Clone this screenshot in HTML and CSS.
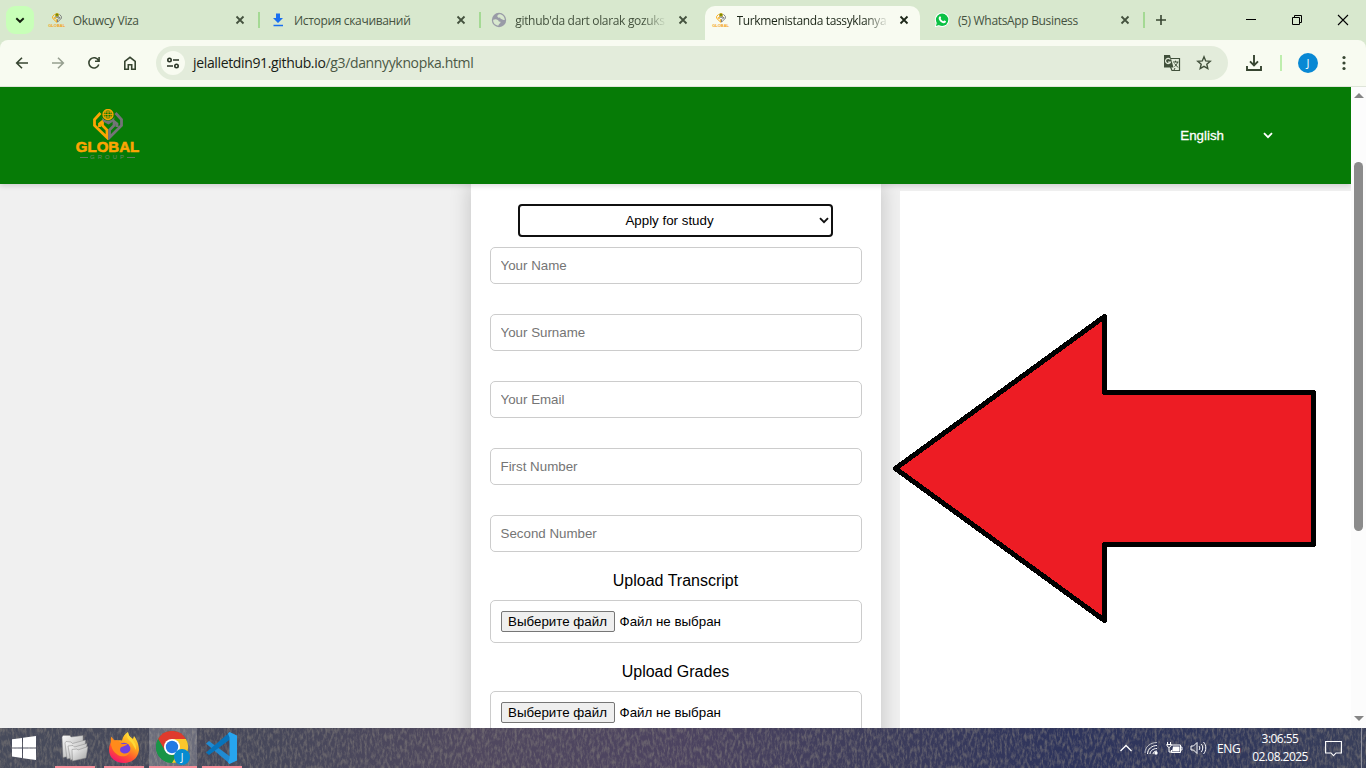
FILE: index.html
```html
<!DOCTYPE html>
<html lang="en">
<head>
<meta charset="utf-8">
<title>Turkmenistanda tassyklanyar</title>
<link rel="stylesheet" href="styles.css">
</head>
<body>
<svg class="defs" width="0" height="0">
  <symbol id="close" viewBox="0 0 16 16"><path d="M4.500 4.500l7 7M11.500 4.500l-7 7" stroke="currentColor" stroke-width="1.800" fill="none"/></symbol>
  <symbol id="mark" viewBox="0 0 64 34">
    <path d="M24.500 4L18.500 10.500v6L31 28.500V21l-4.500-4.500v-4L23.500 15v3" fill="none" stroke="#fca503" stroke-width="2.800"/>
    <path d="M39.500 4l6 6.500v6L33.500 28.500V21l4.500-4.500v-4l3 2.500v3" fill="none" stroke="#737477" stroke-width="2.800"/>
    <path d="M25.500 8c3 5 10 5 13 0l-.5 4-5.500 3.500-5.500-3z" fill="#737477"/>
    <circle cx="32" cy="5.500" r="5" fill="#067b06" stroke="#fca503" stroke-width="1.300"/>
    <path d="M27 5.500h10M28 3h8M28 8h8M32 .5v10M30.500 1c-2 3-2 6 0 9M33.500 1c2 3 2 6 0 9" fill="none" stroke="#fca503" stroke-width=".8"/>
  </symbol>
</svg>

<div class="tabstrip">
  <button class="tab-search"><svg width="12" height="12" viewBox="0 0 12 12"><path d="M2.300 4.200L6 7.800l3.700-3.600" fill="none" stroke="#14210f" stroke-width="1.900"/></svg></button>
  <div class="tab">
    <span class="fav brand"><svg width="16" height="10" viewBox="14 0 36 31"><use href="#mark" width="64" height="34"/></svg><b>GLOBAL</b></span>
    <span class="label">Okuwcy Viza</span>
    <svg class="x" width="16" height="16"><use href="#close"/></svg>
  </div>
  <div class="tab">
    <svg class="fav" width="16" height="16" viewBox="0 0 16 16"><path d="M6 2h4v4.500h3L8 11.500 3 6.500h3zM3.500 13.200h9.500v1.600H3.500z" transform="translate(0 -.5)" fill="#1a6ff0"/></svg>
    <span class="label">История скачиваний</span>
    <svg class="x" width="16" height="16"><use href="#close"/></svg>
  </div>
  <div class="tab no-sep">
    <svg class="fav" width="16" height="16" viewBox="0 0 16 16"><circle cx="8" cy="8" r="7.200" fill="#999ba7"/><path d="M2.200 7.700C5 6.500 7.500 7.500 7.800 9.500l1.700.2c.2 1.800-1.500 1.500-2 3.800C4.500 13.500 1.800 11 2.200 7.700zM8 2.200c-1 .8-2 1-1.600 2.600.8.400 1.200 1.500 2.200.8 1-.4.500 1.400 1.700 1.500 1.200 0 1.200 1.500 3.500.8C13.600 4.800 11.500 2 8 2.200z" fill="#d8e8ce"/></svg>
    <span class="label fade">github'da dart olarak gozuks</span>
    <svg class="x" width="16" height="16"><use href="#close"/></svg>
  </div>
  <div class="tab active">
    <span class="fav brand"><svg width="16" height="10" viewBox="14 0 36 31"><use href="#mark" width="64" height="34"/></svg><b>GLOBAL</b></span>
    <span class="label fade tight">Turkmenistanda tassyklanyar</span>
    <svg class="x" width="16" height="16"><use href="#close"/></svg>
  </div>
  <div class="tab">
    <svg class="fav" width="16" height="16" viewBox="0 0 16 16"><path d="M.8 15.200l1-4A7.200 7.200 0 1 1 5 14.200z" fill="#fff"/><circle cx="8.100" cy="7.800" r="6.200" fill="#0bc144"/><path d="M1.900 14l1-3.500 2.300 2.400z" fill="#0bc144"/><path d="M5.500 4.600c.6-.5 1-.3 1.300.4.500 1 .3 1.200-.2 1.800.7 1.300 1.400 2 2.700 2.500.6-.7.8-1 1.300-.7l1.400.7c0 1.400-1.200 2-2.300 1.900C7 10.800 4.700 8.200 4.700 6.200c0-.7.3-1.200.8-1.600z" fill="#fff"/></svg>
    <span class="label">(5) WhatsApp Business</span>
    <svg class="x" width="16" height="16"><use href="#close"/></svg>
  </div>
  <svg class="plus" width="12" height="12" viewBox="0 0 12 12"><path d="M6 1v10M1 6h10" stroke="#374531" stroke-width="1.600"/></svg>
  <div class="win">
    <svg width="46" height="40" viewBox="0 0 46 40"><path d="M18 19.500h10" stroke="#000"/></svg>
    <svg width="46" height="40" viewBox="0 0 46 40"><path d="M18.500 17.500h7v7h-7zM20.500 17v-1.500h7v7H26" fill="none" stroke="#000"/></svg>
    <svg width="46" height="40" viewBox="0 0 46 40"><path d="M18 15l10 10M28 15l-10 10" stroke="#000" stroke-width="1.100"/></svg>
  </div>
</div>

<div class="toolbar">
  <svg class="nav" viewBox="0 0 16 16"><path d="M14 8H3M8 2.700L2.700 8 8 13.300" /></svg>
  <svg class="nav off" viewBox="0 0 16 16"><path d="M2 8h11M8 2.700L13.300 8 8 13.300"/></svg>
  <svg class="nav" viewBox="0 0 16 16"><path d="M12.800 9.500A5.100 5.100 0 1 1 12.500 5.500M13.100 2v4.200H9"/></svg>
  <svg class="nav" viewBox="0 0 16 16"><path d="M2.800 6.400L8 2.300l5.200 4.100v7.800H9.700V9.700H6.300v4.500H2.800z"/></svg>
  <div class="omnibox">
    <span class="site"><svg width="14" height="14" viewBox="0 0 14 14"><g fill="none" stroke="#2a3526" stroke-width="1.600"><circle cx="3.500" cy="4" r="1.700"/><circle cx="10.500" cy="10" r="1.700"/><path d="M7 4h6M1 10h6"/></g></svg></span>
    <span class="url">jelalletdin91.github.io<i>/g3/dannyyknopka.html</i></span>
    <svg class="translate" width="18" height="18" viewBox="0 0 18 18"><path d="M7 4.500h9.500v12H9L7.500 13" fill="none" stroke="#41503b" stroke-width="1.200"/><path d="M1 1h6l3.500 12.500H1z" fill="#41503b"/><path d="M7.300 5.500A2.600 2.600 0 1 0 7.500 8H5" fill="none" stroke="#e3ecdb" stroke-width="1.200"/><path d="M10 8h5.500M12.500 6.700V8M14.500 8c-.3 2-1.500 3.500-3 4.500M11.500 9.500l3.500 4M11 16l1-2" fill="none" stroke="#41503b"/></svg>
    <svg class="star" width="16" height="16" viewBox="0 0 16 16"><path d="M8 1.800l1.700 4.100 4.500.4-3.400 2.900 1 4.400L8 11.300l-3.800 2.300 1-4.400-3.400-2.900 4.500-.4z" fill="none" stroke="#41503b" stroke-width="1.400"/></svg>
  </div>
  <svg class="dl" width="18" height="18" viewBox="0 0 18 18"><path d="M9 1v10M5 7.300l4 4 4-4M2 12v4h14v-4" fill="none" stroke="#374531" stroke-width="1.900"/></svg>
  <span class="bar"></span>
  <span class="avatar">J</span>
  <svg class="dots" width="4" height="16" viewBox="0 0 4 16"><g fill="#374531"><circle cx="2" cy="2.500" r="1.600"/><circle cx="2" cy="8" r="1.600"/><circle cx="2" cy="13.500" r="1.600"/></g></svg>
</div>

<div class="viewport">
  <main class="page">
    <header class="head">
      <div class="logo">
        <svg width="64" height="31" viewBox="0 0 64 31"><use href="#mark" width="64" height="34"/></svg>
        <b>GLOBAL</b>
        <span class="sub">GROUP</span>
      </div>
      <div class="lang">English<svg width="10" height="7" viewBox="0 0 10 7"><path d="M1 1.200l4 4 4-4" fill="none" stroke="#fff" stroke-width="1.800"/></svg></div>
    </header>
    <form class="card">
      <div class="choice"><span>Apply for study</span><svg width="10" height="7" viewBox="0 0 10 7"><path d="M1 1.200l4 4 4-4" fill="none" stroke="#101010" stroke-width="1.900"/></svg></div>
      <input class="field" placeholder="Your Name">
      <input class="field" placeholder="Your Surname">
      <input class="field" placeholder="Your Email">
      <input class="field" placeholder="First Number">
      <input class="field" placeholder="Second Number">
      <div class="caption">Upload Transcript</div>
      <div class="file"><span class="pick">Выберите файл</span><span>Файл не выбран</span></div>
      <div class="caption">Upload Grades</div>
      <div class="file"><span class="pick">Выберите файл</span><span>Файл не выбран</span></div>
    </form>
    <div class="paper"></div>
    <svg class="arrow" width="424" height="310" viewBox="0 0 424 310" shape-rendering="crispEdges"><path d="M3.500 155.500L212.500 3.500v76h209v152h-209v76z" fill="#ed1c24" stroke="#000" stroke-width="5" stroke-linejoin="round"/></svg>
  </main>
  <div class="scroll"><i class="up"></i><span class="thumb"></span><i class="down"></i></div>
</div>

<footer class="taskbar">
  <svg class="grain" width="1366" height="40">
    <filter id="g" x="0" y="0" width="100%" height="100%" color-interpolation-filters="sRGB"><feTurbulence type="fractalNoise" baseFrequency="0.4 0.16" numOctaves="3" seed="5"/><feColorMatrix values="0 0 0 0 .52  0 0 0 0 .5  0 0 0 0 .48  2.600 0 0 0 -1.050"/></filter>
    <rect width="1366" height="40" filter="url(#g)"/>
  </svg>
  <div class="app start"><svg width="24" height="24" viewBox="0 0 24 24"><path d="M0 3.300l10-1.400v9.500H0zM11 1.800L24 0v11.400H11zM0 12.400h10V22L0 20.600zM11 12.400h13V24l-13-1.800z" fill="#fff"/></svg></div>
  <div class="app run"><svg width="30" height="28" viewBox="0 0 30 28">
    <defs><linearGradient id="fd" x1="0" y1="0" x2="1" y2="1"><stop offset="0" stop-color="#fafafa"/><stop offset="1" stop-color="#a2a2a2"/></linearGradient></defs>
    <g fill="url(#fd)" stroke="#858585" stroke-width=".5"><path d="M2 3l1-1.500h7l1 1.500 12-1.500v18L3 23.500z"/><path d="M5 9l1-1.500 5 .5 1.500 1.500 13-3.500-1 15L7 25z"/><path d="M8 12l5-.5 1.500 1.500L27 9.500l-1.500 13L10.500 26z"/><path d="M12 15.500l5-.5 1 1 10-3.500-2 11.500L12.500 27z"/></g></svg></div>
  <div class="app run"><svg width="32" height="32" viewBox="0 0 32 32">
    <defs><linearGradient id="ff" x1=".85" y1="0" x2=".3" y2="1"><stop offset="0" stop-color="#fff044"/><stop offset=".38" stop-color="#ffab1d"/><stop offset=".7" stop-color="#ff5330"/><stop offset="1" stop-color="#f5156c"/></linearGradient></defs>
    <path d="M3 5c1 0 2 3 4 3.500C9 8 12 8 14 8.500 15 4 17 2 20 0c0 4 3 5 5 7l1-3c4 5 5 11 5 14-1 8-7 13-15 13C7 31 1 25 1 18 1 14 2 12 3 10z" fill="url(#ff)"/>
    <circle cx="16" cy="17" r="6.300" fill="#7141df"/><path d="M3 5c1 0 2 3 4 3.500 2-.7 4 .5 6 3.500h6c0 2-5 2-6.500 4-1.500 3 1 5.500 4.500 5.500 2 0 4-1 5-3 0 6-9 8-14 3C4 19 2 12 3 5z" fill="#ff8b1b"/><path d="M20 0c0 6 9 8 8 18l-4-7c-2-3-7-4-4-11z" fill="#ffda37"/></svg></div>
  <div class="app run current"><svg width="34" height="34" viewBox="0 0 34 34">
    <circle cx="16" cy="16" r="16" fill="#199447"/><path d="M2.100 8A16 16 0 0 1 29.900 8L16 16H9z" fill="#df3a2d"/><path d="M16 8h13.900A16 16 0 0 1 16 32l7-12z" fill="#fcc62c"/><path d="M2.100 8l7 12 7-4z" fill="#df3a2d"/><path d="M2.100 8l7 12 6.900 4-4 7.500A16 16 0 0 1 2.100 8z" fill="#199447"/><circle cx="16" cy="16" r="8" fill="#fff"/><circle cx="16" cy="16" r="6.200" fill="#2379e4"/>
    <circle cx="26" cy="26" r="8" fill="#078bd0"/><text x="26" y="29.700" text-anchor="middle" font-family="Open Sans,sans-serif" font-size="10" fill="#fff">J</text></svg></div>
  <div class="app run"><svg width="32" height="32" viewBox="0 0 32 32"><path d="M0 11.500L3 9l21 15.500V32z" fill="#1f8ad2"/><path d="M0 20.500L3 23 24 7.500V0z" fill="#0873ba"/><path d="M23.500 0L31 3.500v25L23.500 32 22 30.500l1.500-4v-21L22 1.500z" fill="#27a5ef"/></svg></div>
  <div class="tray">
    <svg width="14" height="10" viewBox="0 0 14 10"><path d="M1.500 8L7 2.500 12.500 8" fill="none" stroke="#fff" stroke-width="1.300"/></svg>
    <svg class="wifi" width="14" height="14" viewBox="0 0 14 14"><g fill="none" stroke="#fff"><path d="M1 12C1 6 6 1.500 13 1.500" opacity=".65"/><path d="M3.500 13C3.500 8 8 4.500 13 4.500M6 13c0-3 3-5.500 7-5.500M9 13c0-2 2-3 4-3"/></g><circle cx="12" cy="12" r="1.700" fill="#fff"/></svg>
    <svg class="batt" width="17" height="14" viewBox="0 0 17 14"><path d="M5 4h9.500v7.500h-9V9M15 6h1v3h-1" fill="none" stroke="#fff"/><path d="M7 5.500h6.500v5H6z" fill="#fff"/><path d="M1.500 1v2M4.500 1v2M.5 3.500h5M1 4c0 3 4 3 4 0M3 6v5h3" fill="none" stroke="#fff"/></svg>
    <svg class="vol" width="17" height="14" viewBox="0 0 17 14"><path d="M1 5h2.500L7 1.500v11L3.500 9H1zM9 5c1 1 1 3 0 4M11.200 3c2 2 2 6 0 8M13.500 1c3 3 3 9 0 12" fill="none" stroke="#fff"/></svg>
    <span class="eng">ENG</span>
    <div class="clock"><span>3:06:55</span><span>02.08.2025</span></div>
    <svg class="note" width="17" height="17" viewBox="0 0 17 17"><path d="M.6 1.500h15.800v11.500H11l-2.500 2.700L6 13H.6z" fill="none" stroke="#fff" stroke-width="1.100"/></svg>
  </div>
  <span class="peek"></span>
</footer>
</body>
</html>
```
FILE: styles.css
```css
* { box-sizing: border-box; }
body { margin: 0; width: 1366px; height: 768px; overflow: hidden; display: flex; flex-direction: column; background: #d8e8ce; font-family: "Liberation Sans", Arial, sans-serif; }
.defs { position: absolute; }
svg { flex: none; display: block; }

.tabstrip { height: 40px; flex: none; display: flex; padding-left: 6px; font: 12px "Open Sans", "Noto Sans", sans-serif; color: #44523e; }
.tab-search { width: 28px; height: 28px; margin: 6px 4.500px 0 0; padding: 0; border: 0; border-radius: 9px; background: #c8ffb8; display: grid; place-items: center; }
.tab { width: 221.300px; flex: none; height: 40px; padding: 0 11.800px 0 10.200px; display: flex; align-items: center; position: relative; }
.tab::after { content: ""; position: absolute; right: 0; top: 12px; width: 2px; height: 16px; background: #a4d994; }
.tab.no-sep::after, .tab.active::after { display: none; }
.tab.active { color: #1c2618; z-index: 0; }
.tab.active::before { content: ""; position: absolute; z-index: -1; left: 2.600px; right: 3.700px; top: 6px; bottom: 0; border-radius: 10px 10px 0 0; background: #f8fbf1; }
.fav { width: 16px; margin-right: 8px; flex: none; }
.brand { display: flex; flex-direction: column; align-items: center; }
.brand b { font: bold 4px/5px "Liberation Sans", sans-serif; color: #f5a51c; }
.label { flex: 1; min-width: 0; white-space: nowrap; margin-right: 9px; line-height: 18px; padding-top: 1px; letter-spacing: -.33px; }
.tight { letter-spacing: -.36px; }
.fade { -webkit-mask-image: linear-gradient(90deg, #000 128px, transparent 152px); mask-image: linear-gradient(90deg, #000 128px, transparent 152px); }
.plus { margin: 14px 0 0 10px; }
.win { display: flex; margin-left: auto; }

.toolbar { height: 47px; flex: none; display: flex; align-items: center; padding: 0 20px 1px 14px; background: #f8fbf1; border-radius: 8px 8px 0 0; border-bottom: 1px solid #dfe5d9; }
.nav { width: 16px; height: 16px; margin-right: 20px; fill: none; stroke: #374531; stroke-width: 1.600; }
.off { opacity: .5; }
.omnibox { width: 1072px; height: 34px; margin-left: -2px; border-radius: 17px; background: #e3ecdb; display: flex; align-items: center; padding: 0 16px 0 5px; }
.site { width: 24px; height: 24px; border-radius: 50%; background: #f8fbf1; display: grid; place-items: center; }
.url { flex: 1; margin-left: 8px; font: 14px "Open Sans", "Noto Sans", sans-serif; letter-spacing: -.35px; color: #182015; }
.url i { font-style: normal; color: #4b5845; }
.translate { margin-right: 15px; }
.dl { margin-left: 17px; }
.bar { width: 2px; height: 16px; background: #beeeae; margin: 0 16px 0 17px; }
.avatar { width: 20px; height: 20px; border-radius: 50%; background: #0888d4; color: #fff; display: grid; place-items: center; font: 11px/20px "Open Sans", sans-serif; }
.dots { margin-left: auto; }

.viewport { flex: 1; min-height: 0; display: flex; }
.page { flex: 1; position: relative; overflow: hidden; background: #f0f0f0; display: flex; flex-direction: column; align-items: center; }
.head { position: relative; z-index: 1; flex: none; align-self: stretch; height: 97px; background: #067b06; box-shadow: 0 2px 5px rgba(0,0,0,.14); display: flex; justify-content: space-between; padding: 20px 78px 0 75px; }
.logo { width: 65px; display: flex; flex-direction: column; align-items: center; padding-top: 2px; }
.logo b { font: bold 15px/14px "Liberation Sans", sans-serif; color: #fca503; letter-spacing: 0; -webkit-text-stroke: .6px #fca503; }
.sub { display: flex; align-items: center; font: 6px/6px "Liberation Sans", sans-serif; color: #6a8768; letter-spacing: 3px; }
.sub::before, .sub::after { content: ""; width: 8px; height: 1px; background: #5c7d5a; }
.sub::before { margin-right: 2px; }
.lang { display: flex; gap: 39px; align-items: center; height: 56px; color: #fff; font-size: 13.333px; -webkit-text-stroke: .3px #fff; }

.card { width: 410px; flex: none; height: 580px; background: #fff; padding: 20px 19px 0; display: flex; flex-direction: column; align-items: center; box-shadow: 0 0 20px rgba(0,0,0,.2); font-size: 13.333px; color: #000; }
.choice { width: 315px; height: 33px; margin-bottom: 10px; margin-right: 1px; border: 2px solid #101010; border-radius: 4px; padding: 0 2px 0 1px; display: flex; align-items: center; }
.choice span { flex: 1; text-align: center; }
.field { flex: none; width: 372px; height: 37px; margin: 0 0 30px; border: 1px solid #ccc; border-radius: 5px; padding: 0 10px; font: 13.333px "Liberation Sans", Arial, sans-serif; background: #fff; outline: 0; }
.field::placeholder { color: #757575; }
.caption { font-size: 16px; line-height: 18px; margin: -10px 0 10px; }
.file { width: 372px; height: 43px; flex: none; border: 1px solid #ccc; border-radius: 5px; margin-bottom: 30px; padding: 10px; display: flex; gap: 5px; line-height: 21px; }
.pick { height: 21px; width: 114px; border: 1px solid #767676; border-radius: 2px; background: #efefef; line-height: 19px; text-align: center; white-space: nowrap; }
.paper { position: absolute; left: 900px; top: 104px; right: 0; bottom: 0; background: #fff; }
.arrow { position: absolute; left: 892px; top: 226px; }
.scroll { width: 15px; background: #fcfcfc; display: flex; flex-direction: column; align-items: center; padding: 6px 0 7px; }
.scroll i { border: 5px solid transparent; }
.up { border-top: 0 !important; border-bottom-color: #858585 !important; }
.down { border-bottom: 0 !important; border-top-color: #858585 !important; margin-top: auto; }
.thumb { width: 9px; height: 369px; margin-top: 64px; border-radius: 5px; background: #8b8b8b; }

.taskbar { position: relative; z-index: 0; height: 40px; flex: none; display: flex; color: #fff; background: linear-gradient(90deg, #474b5b, #46475a 20%, #50485f 35%, #4c4360 50%, #3c3c5b 65%, #2e345c 78%, #30375b 90%, #393f5a); }
.grain { position: absolute; inset: 0; z-index: -1; opacity: .55; }
.app { width: 48px; height: 40px; margin-right: 1px; flex: none; display: grid; place-items: center; position: relative; }
.start { margin-right: 3px; }
.run::after { content: ""; position: absolute; left: 4px; right: 4px; bottom: 0; height: 2px; background: #f78f9b; }
.current { background: rgba(255,255,255,.2); }
.current::after { left: 0; right: 0; }
.tray { margin-left: auto; display: flex; align-items: center; font: 12px "Open Sans", "Noto Sans", sans-serif; }
.wifi { margin-left: 11px; }
.batt { margin-left: 8px; }
.vol { margin-left: 7px; }
.eng { width: 24px; margin-left: 10px; letter-spacing: -.3px; }
.clock { width: 56px; margin: 0 17px 0 11px; display: flex; flex-direction: column; align-items: center; line-height: 18px; letter-spacing: -.55px; }
.peek { width: 1px; height: 40px; margin: 0 4px 0 19px; background: #8e909d; }
```
